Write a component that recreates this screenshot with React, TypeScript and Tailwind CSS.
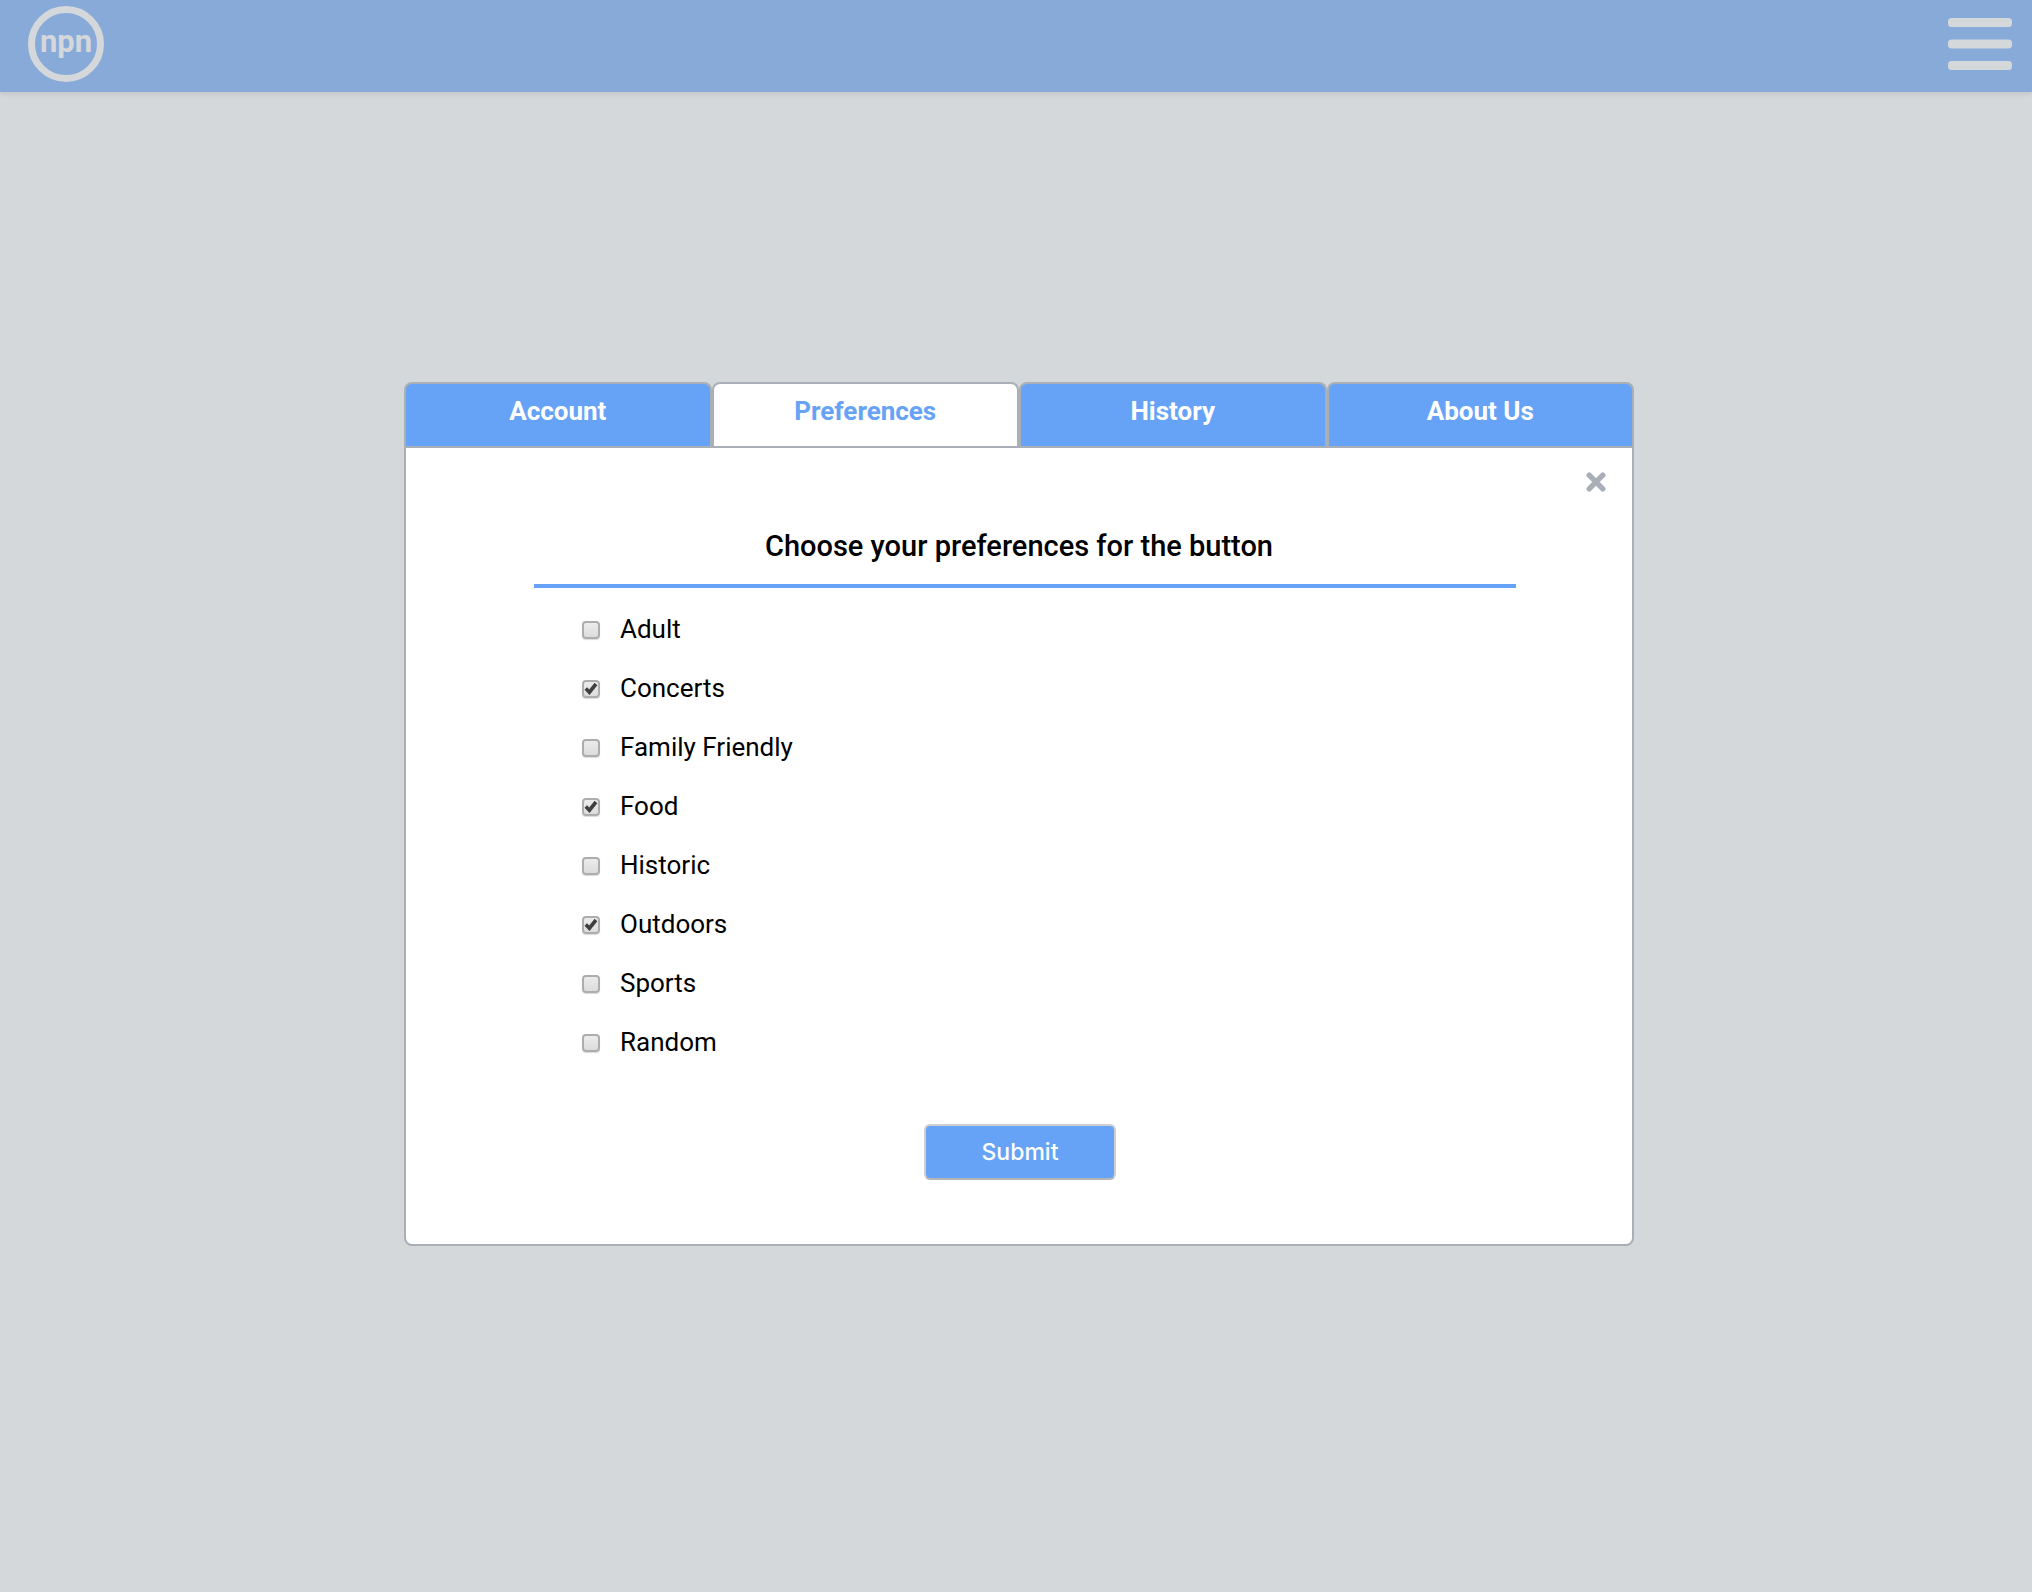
import { useState } from "react";

const tabs = ["Account", "Preferences", "History", "About Us"];

const options = [
  { name: "Adult", on: false },
  { name: "Concerts", on: true },
  { name: "Family Friendly", on: false },
  { name: "Food", on: true },
  { name: "Historic", on: false },
  { name: "Outdoors", on: true },
  { name: "Sports", on: false },
  { name: "Random", on: false },
];

function Header() {
  return (
    <header className="flex h-[92px] items-center justify-between bg-[#88aad8] pr-5 pl-7 shadow-[0_1px_6px_rgba(0,0,0,0.12)]">
      <a
        href="#"
        className="-mt-1 flex size-[76px] items-center justify-center rounded-full border-[7px] border-[#d4d8db] text-[31px] leading-8 font-bold text-[#d4d8db]"
      >
        <span className="-mt-1">npn</span>
      </a>
      <button type="button" aria-label="Open menu" className="-mt-1 text-[#d4d8db]">
        <svg width="64" height="52" viewBox="0 0 64 52" fill="currentColor">
          <rect x="0" y="0" width="64" height="9" rx="3.5" />
          <rect x="0" y="21.5" width="64" height="9" rx="3.5" />
          <rect x="0" y="43" width="64" height="9" rx="3.5" />
        </svg>
      </button>
    </header>
  );
}

function Tabs({ active, onPick }: { active: string; onPick: (tab: string) => void }) {
  return (
    <div role="tablist" className="grid grid-cols-4">
      {tabs.map((tab) => (
        <button
          key={tab}
          type="button"
          role="tab"
          aria-selected={tab === active}
          onClick={() => onPick(tab)}
          className={
            "h-16 rounded-t-lg border-2 border-b-0 border-[#a9afb6] pb-2 text-[26px] leading-8 font-bold " +
            (tab === active ? "bg-white text-[#66a3f6]" : "bg-[#66a3f6] text-white")
          }
        >
          {tab}
        </button>
      ))}
    </div>
  );
}

function Option({ name, on }: { name: string; on: boolean }) {
  return (
    <li className="flex h-[59px] items-center">
      <label className="flex items-center gap-5 text-[26px] leading-8">
        <span className="relative mt-0.5 size-[18px]">
          <input
            type="checkbox"
            defaultChecked={on}
            className="peer block size-[18px] appearance-none rounded-[4px] border-2 border-[#adadad] bg-linear-to-b from-[#ececec] to-[#dcdcdc] shadow-[0_1px_1px_rgba(0,0,0,0.15)]"
          />
          <svg
            viewBox="0 0 18 18"
            className="pointer-events-none absolute inset-0 hidden size-[18px] peer-checked:block"
            fill="none"
            stroke="#3f3f3f"
            strokeWidth="3.6"
          >
            <path d="M3.8 8.6 7.4 12.2 14 4" />
          </svg>
        </span>
        {name}
      </label>
    </li>
  );
}

export default function App() {
  const [active, setActive] = useState("Preferences");
  return (
    <div className="min-h-screen bg-[#d4d8db] font-[Roboto,sans-serif] text-black">
      <Header />
      <main className="pt-[290px] pl-1.5">
        <div className="mx-auto max-w-[1230px]">
          <Tabs active={active} onPick={setActive} />
          <section className="rounded-b-lg border-2 border-[#a9afb6] bg-white pb-16">
            <div className="flex justify-end pt-6 pr-[26px]">
              <button type="button" aria-label="Close" className="text-[#a9afb6]">
                <svg width="20" height="20" viewBox="0 0 20 20" stroke="currentColor" strokeWidth="5.4" strokeLinecap="round">
                  <path d="M3.2 3.2 16.8 16.8M16.8 3.2 3.2 16.8" />
                </svg>
              </button>
            </div>
            <h1 className="pt-9 pb-5 text-center text-[29px] leading-9 font-medium">Choose your preferences for the button</h1>
            <form onSubmit={(e) => e.preventDefault()}>
              <ul className="mr-[116px] ml-32 border-t-4 border-[#66a3f6] pt-[11px] pl-12">
                {options.map((o) => (
                  <Option key={o.name} {...o} />
                ))}
              </ul>
              <div className="flex justify-center pt-[53px] pl-0.5">
                <button
                  type="submit"
                  className="h-14 w-48 rounded-md border-2 border-[#cfcfcf] border-b-[#b5b5b5] bg-[#66a3f6] font-['Inter',sans-serif] text-[23px] leading-7 font-medium text-white"
                >
                  Submit
                </button>
              </div>
            </form>
          </section>
        </div>
      </main>
    </div>
  );
}
